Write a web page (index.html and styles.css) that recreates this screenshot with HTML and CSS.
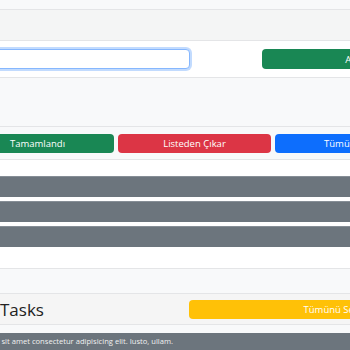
FILE: index.html
```html
<!DOCTYPE html>
<html lang="en">
<head>
    <meta charset="UTF-8">
    <meta name="viewport" content="width=device-width, initial-scale=1.0">
    <title>Tasks</title>
    <link rel="stylesheet" href="styles.css">
</head>
<body>
    <div class="top"></div>
    <div class="band"></div>

    <div class="form-row">
        <input type="text" class="task-input" autofocus>
        <button class="btn btn-green btn-add">Add</button>
    </div>

    <div class="spacer"></div>

    <div class="actions">
        <button class="btn btn-green">Tamamlandı</button>
        <button class="btn btn-red">Listeden Çıkar</button>
        <button class="btn btn-blue">Tümünü Seç</button>
    </div>

    <div class="list">
        <div class="item"></div>
        <div class="item"></div>
        <div class="item"></div>
    </div>

    <div class="gap"></div>

    <div class="tasks-head">
        <h2>Tasks</h2>
        <button class="btn btn-yellow">Tümünü Seç</button>
    </div>

    <div class="footer">
        <div class="footer-text">
            <p>Lorem ipsum dolor sit amet consectetur adipisicing elit. Iusto, ullam.</p>
        </div>
    </div>
</body>
</html>
```

FILE: styles.css
```css
body {
    margin: 0;
    font-family: "Open Sans", Arial, sans-serif;
    background-color: #f8f9fa;
    overflow: hidden;
}
.top {
    height: 9px;
    border-bottom: 1px solid #e4e5e7;
}
.band {
    height: 30px;
    background: #f4f5f5;
    border-bottom: 1px solid #e4e5e7;
}
.form-row {
    display: flex;
    align-items: center;
    height: 36px;
    background: white;
    border-bottom: 1px solid #e4e5e7;
}
.task-input {
    flex: none;
    box-sizing: border-box;
    width: 300px;
    height: 20px;
    margin-left: -110px;
    border: 1px solid #86b7fe;
    border-radius: 4px;
    box-shadow: 0 0 0 2px rgba(13,110,253,0.25);
    outline: none;
}
.btn {
    flex: none;
    height: 20px;
    border: none;
    border-radius: 4px;
    color: white;
    font-family: inherit;
    font-size: 9.5px;
    padding: 0;
}
.btn-add {
    width: 184px;
    margin-left: 72px;
}
.btn-green { background-color: #198754; }
.btn-red { background-color: #dc3545; }
.btn-blue { background-color: #0d6efd; }
.btn-yellow { background-color: #ffc107; }
.spacer {
    height: 48px;
    border-bottom: 1px solid #e4e5e7;
}
.actions {
    display: flex;
    gap: 4px;
    align-items: center;
    height: 32px;
    margin-left: -39px;
    border-bottom: 1px solid #e4e5e7;
}
.actions .btn {
    width: 153px;
    height: 19px;
}
.list {
    background: white;
    padding: 16px 0 21px;
    border-bottom: 1px solid #e4e5e7;
}
.item {
    height: 20px;
    background: #6c757d;
    border-top: 1px solid #868e96;
    margin-bottom: 4px;
}
.item:last-child {
    margin-bottom: 0;
}
.gap {
    height: 24px;
    border-bottom: 1px solid #e4e5e7;
}
.tasks-head {
    display: flex;
    align-items: center;
    height: 30px;
    background: #f5f5f5;
    border-bottom: 1px solid #e4e5e7;
}
.tasks-head h2 {
    flex: none;
    margin: 0;
    width: 189px;
    font-size: 17px;
    font-weight: normal;
    color: #222;
}
.tasks-head .btn {
    width: 284px;
    height: 19px;
}
.footer {
    margin-top: 8px;
    height: 20px;
    background: #6c757d;
}
.footer-text {
    display: flex;
    justify-content: flex-end;
    width: 173px;
}
.footer p {
    flex: none;
    margin: 0;
    padding-top: 3px;
    white-space: nowrap;
    color: #f1f1f1;
    font-size: 7.6px;
}
```
